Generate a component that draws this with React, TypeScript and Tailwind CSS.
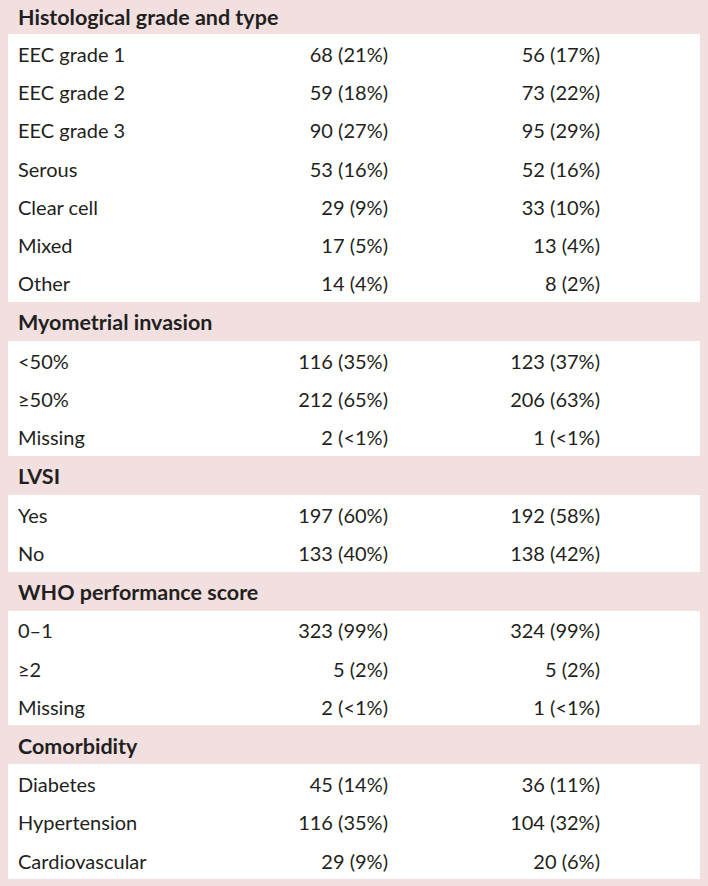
const sections = [
  {
    title: 'Histological grade and type',
    rows: [
      ['EEC grade 1', '68 (21%)', '56 (17%)'],
      ['EEC grade 2', '59 (18%)', '73 (22%)'],
      ['EEC grade 3', '90 (27%)', '95 (29%)'],
      ['Serous', '53 (16%)', '52 (16%)'],
      ['Clear cell', '29 (9%)', '33 (10%)'],
      ['Mixed', '17 (5%)', '13 (4%)'],
      ['Other', '14 (4%)', '8 (2%)']
    ]
  },
  {
    title: 'Myometrial invasion',
    rows: [
      ['<50%', '116 (35%)', '123 (37%)'],
      ['≥50%', '212 (65%)', '206 (63%)'],
      ['Missing', '2 (<1%)', '1 (<1%)']
    ]
  },
  {
    title: 'LVSI',
    rows: [
      ['Yes', '197 (60%)', '192 (58%)'],
      ['No', '133 (40%)', '138 (42%)']
    ]
  },
  {
    title: 'WHO performance score',
    rows: [
      ['0–1', '323 (99%)', '324 (99%)'],
      ['≥2', '5 (2%)', '5 (2%)'],
      ['Missing', '2 (<1%)', '1 (<1%)']
    ]
  },
  {
    title: 'Comorbidity',
    rows: [
      ['Diabetes', '45 (14%)', '36 (11%)'],
      ['Hypertension', '116 (35%)', '104 (32%)'],
      ['Cardiovascular', '29 (9%)', '20 (6%)']
    ]
  }
]

export default function App() {
  return (
    <div
      className="w-[708px] h-[886px] overflow-hidden bg-[#f2e0e0] px-2 text-[#231f20] text-[20px]"
      style={{ fontFamily: 'Lato, "Open Sans", sans-serif' }}
    >
      {sections.map((section, i) => (
        <div key={section.title}>
          {/* section header on the pink band */}
          <div
            className={`flex items-center px-[10px] font-bold text-[21.5px] ${
              i === 0 ? 'h-[34px]' : 'h-[39px] pt-[2px]'
            }`}
          >
            {section.title}
          </div>
          <div className="bg-white">
            {section.rows.map(([label, a, b]) => (
              <div
                key={label + a}
                className="grid grid-cols-[260px_110px_212px] items-center h-[38.3px] pl-[10px] pt-[1px]"
              >
                <span>{label}</span>
                <span className="text-right">{a}</span>
                <span className="text-right">{b}</span>
              </div>
            ))}
          </div>
        </div>
      ))}
    </div>
  )
}
